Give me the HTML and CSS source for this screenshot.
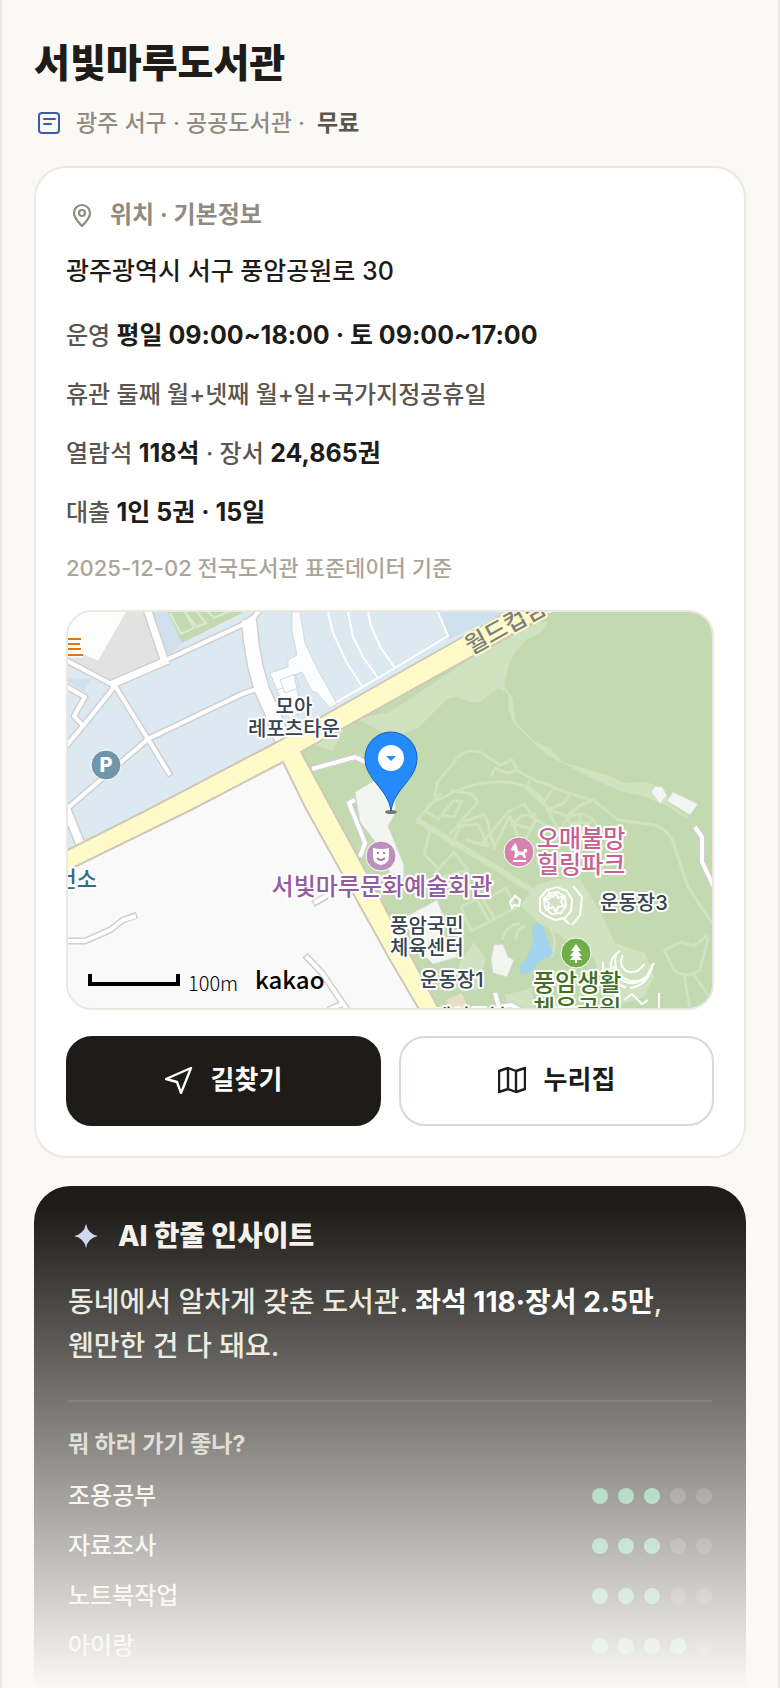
FILE: index.html
```html
<!DOCTYPE html>
<html lang="ko">
<head>
    <meta charset="utf-8">
    <meta name="viewport" content="width=device-width, initial-scale=1">
    <title>서빛마루도서관</title>
    <link rel="stylesheet" href="styles.css">
</head>
<body>
<main class="page">
    <h1>서빛마루도서관</h1>
    <p class="meta">
        <svg class="icon" viewBox="0 0 26 26" fill="none" stroke="currentColor" stroke-width="2" stroke-linecap="round">
            <rect x="3" y="3" width="20" height="20" rx="3"/>
            <path d="M8 9h11M8 14h7"/>
        </svg>
        <span>광주 서구 · 공공도서관 ·</span>
        <b>무료</b>
    </p>

    <section class="card">
        <h2 class="card_title">
            <svg class="icon" viewBox="0 0 26 26" fill="none" stroke="currentColor" stroke-width="2.2" stroke-linejoin="round">
                <path d="M13 24c-3-3-8-7.500-8-13a8 8 0 0 1 16 0c0 5.500-5 10-8 13z"/>
                <circle cx="13" cy="11" r="3"/>
            </svg>
            위치 · 기본정보
        </h2>
        <p class="address">광주광역시 서구 풍암공원로 30</p>
        <ul class="info">
            <li>운영 <b>평일 09:00~18:00 · 토 09:00~17:00</b></li>
            <li>휴관 둘째 월+넷째 월+일+국가지정공휴일</li>
            <li>열람석 <b>118석</b> · 장서 <b>24,865권</b></li>
            <li>대출 <b>1인 5권 · 15일</b></li>
        </ul>
        <p class="source">2025-12-02 전국도서관 표준데이터 기준</p>

        <div class="map">
            <svg viewBox="68 612 644 396" preserveAspectRatio="xMidYMid slice">
                <rect x="68" y="612" width="644" height="396" fill="#dce9f0"/>
                <!-- 블록 -->
                <path fill="#fcfcfc" d="M68 612h59l-29 49-30-12z"/>
                <path fill="#e2e2e2" d="M126 612h18l20 48-49 22-47-22v-6l13-1 17 8z"/>
                <path fill="#cfe1ee" d="M152 612h17l14 31-15 13zM68 678l23 1-7 12-16-9zM438 612h68l-58 28z"/>
                <path fill="#c3dab0" d="M168 612h76l-62 31z"/>
                <path fill="none" stroke="#dbe9cf" stroke-width="2" d="M170 613l11 21 13-6-9-16M185 612l12 15 9-4-9-11M208 612l6 6 14-6"/>
                <path fill="#f9f9f9" d="M68 868h7l208-106 135 246H68z"/>
                <path fill="#c3dab0" d="M301 752l89-50 162-90h160v396H439z"/>
                <path fill="#d0e2c0" d="M390 712l83-55 67-35h8l-7 11-14 6-12 13-6 13-5 21 8 11 4 25 19 20 15 6 12 14 45 13 18 8 22-1 16 8 12 20-10-5-22-9-23-5-33-15-40-21-20-19-14-13-4-12-1-17-8-5-5 1-15 12h-8l-17-5-8 2-29 29-26 10-40-22-20 35-25-9 12-15z"/>
                <path fill="#d0e2c0" d="M537 885l18-6h25l22 36 13 28 30 10 9 24-10 20-34 11-16-50-24-16-31-19-19-18zM460 962l14-20 12 17-10 32-21-7zM505 995l26-7 4 20h-26z"/>
                <!-- 산책로 -->
                <g fill="none" stroke="#d0e2c0" stroke-width="3" stroke-linejoin="round">
                    <path d="M435 797l2-14 23-28q10-6 20-3l20 13 12-5 6 11 20 11q10 1 16 6l40 13 24 19 36 5q16 5 20 20l14 42 28 42 10 4M664 802l24 16"/>
                    <path d="M428 805l26-13q30-14 60-9 18 3 29 17l12 24 22 26M417 820l24-27M424 810l14 9 15-18h9l-8 16-14-2M450 790l22 4 6 8-28 32M452 846l8-20 18-2 10 22-22-6"/>
                    <path stroke-width="6" d="M417 820l86 52 34 22"/>
                    <path d="M491 776l4-8 12 5 10-3M530 780l-4 8 24 22 17 6 12-10 14-6 18 14M552 790l-9 14M570 793l-6 10-14 6M480 846l28-34 16-8 12 16-14 26-12 6M536 814l-14 2-10 8 18 4M463 822l22-8 10 36M495 846l15-30 8 20M530 816l34 20"/>
                    <path d="M434 874l20-22 14 18-28 8zM430 830l-6 24 14 14M461 907l20-10 14 22-24 12-10-24M478 901l12 22M484 900l22-12 10 20-24 12M502 940q4-16 18-16M516 940q0-12 10-14M544 923q16 10 8 34M664 950l18-8 12 4 14-11M664 950l10 20q12 10 26 0l8-32M684 975l6 33M692 972l20 28"/>
                    <circle cx="580" cy="832" r="18"/>
                    <circle cx="580" cy="832" r="10"/>
                    <path d="M562 832h36M580 814v36M567 819l26 26M593 819l-26 26"/>
                </g>
                <!-- 이면도로 -->
                <g fill="none" stroke="#d0d0d0" stroke-linejoin="round">
                    <path stroke-width="10" d="M146 606l19 56M110 685l58-25"/>
                    <path stroke-width="7" d="M166 660l76-35 12-8 8-10M62 658l53 28 33 53 23 37M148 739l94-45 17-6M148 739l-86 74M115 686l-32 40-21 25M62 684l23 13-11 19 9 10"/>
                    <path stroke-width="17" d="M249 620l2 20 4 25 7 25 10 22 13 36"/>
                    <path stroke-width="11" d="M64 804l16 39"/>
                    <path stroke-width="7" d="M62 941h23l25-11 13-10 14-5M312 769l43-12 10 5M355 800l-6 3 16 40-5 14M305 955l17 18 26 38M313 904l14-8M695 827l7 10v25l13 27"/>
                    <path stroke-width="7" d="M495 993l4 14 12-2 15 8M328 1010l14-6"/>
                </g>
                <g fill="none" stroke="#fff" stroke-linejoin="round">
                    <path stroke-width="7" d="M146 606l19 56M110 685l58-25"/>
                    <path stroke-width="4" d="M166 660l76-35 12-8 8-10M62 658l53 28 33 53 22 36M148 739l94-45 17-6M148 739l-86 74M115 686l-32 40-21 25M62 684l23 13-11 19 9 10"/>
                    <path stroke-width="14" d="M249 620l2 20 4 25 7 25 10 22 13 36"/>
                    <path stroke-width="8" d="M64 804l16 39"/>
                    <path stroke-width="4" d="M62 941h23l25-11 13-10 13-4M312 769l43-12 10 5M355 800l-6 3 16 40-5 14M306 956l16 17 26 38M314 903l14-8M695 827l7 10v25l13 27"/>
                    <path stroke-width="4" d="M495 993l4 14 12-2 15 8M328 1010l14-6"/>
                    <path stroke-width="2" d="M328 612l5 21 14 30 16 25M348 612l5 25 10 20 15 21M368 612l3 14 10 22 14 20M335 703l60-35 53-32-10-24"/>
                </g>
                <!-- 건물 -->
                <g stroke="#d5d9da" stroke-width="1">
                    <path fill="#fafcfd" d="M292 612h8l5 31 12 25 20 36-7 4-13-15-5-2-10-19-8 3 3 15 5 20-12 10-13-30-7-17 18-6v-7l9-5-5-23z"/>
                    <path fill="none" d="M280 680l15-6 5 13-15 6zM277 690l6-2"/>
                    <path fill="#f3f6f0" d="M355 792l25-15 12 10 3 13 1 12-8 14 16 39v14l-14-6-10-25-20-26zM405 917l32-17 8 20-4 14 17 23-25 7-20-20z"/>
                    <path fill="#f3f6f0" d="M494 945l9-1 5 13 6 3-7 17-14-4-2-14zM655 786l7 1 5 8-7 9-9-12zM673 792l25 12-8 11-23-14z"/>
                    <path fill="#e9dcc0" stroke="none" d="M446 1000l16-7 6 15h-18z"/>
                </g>
                <!-- 광장, 야외무대 -->
                <g fill="none" stroke="#fff" stroke-width="2">
                    <path d="M540 911v-13l7-8 10-3 10 4 5 9-1 11-6 7-10 2-9-4z"/>
                    <path d="M545 908l-1-9 6-6 8-1 7 5 1 9-5 7-9 1zM549 893l4 4 3-4 2 5 6-2-3 6 3 4-6 1-2 5-3-5-6 2 2-5-3-4 4-2zM573 886l9 11-2 18-8 10M563 918l6 6M510 902l5-6 5 4-1 6-5-1-2 3z"/>
                    <path d="M620 951q-11 7-9 18 2 14 15 19M616 954q-3 16 6 23 14 9 25-1l7-13M613 966q6 18 20 17 16-2 19-18M623 955q-5 10 3 16 12 4 18-7M603 962v12M630 988q18-2 23-24M659 993v15M624 1000l8-6 10 10 6-4"/>
                </g>
                <path fill="#a3d4ee" d="M532 928q4-7 10-3l5 12 6 17-7 4q-8 3-14 13-7 5-11 1-4-4 1-9 6-4 11-20z"/>
                <!-- 간선도로 -->
                <path fill="#fffbc9" stroke="#cfc8b8" stroke-width="2" d="M60 854l87-44 130-68 113-64 115-65 24-14h40l-17 13-162 90-89 50 57 105 82 154h-20l-30-51-85-153-22-45-92 48-131 64z"/>

                <g class="labels">
                    <text x="294" y="714" text-anchor="middle">모아</text>
                    <text x="294" y="736" text-anchor="middle">레포츠타운</text>
                    <text x="600" y="910">운동장3</text>
                    <text x="390" y="933">풍암국민</text>
                    <text x="390" y="955">체육센터</text>
                    <text x="420" y="987">운동장1</text>
                    <text x="433" y="1024">게이트볼</text>
                    <text class="health" x="97" y="887" text-anchor="end">보건소</text>
                    <text class="big road" transform="translate(471 655) rotate(-29)">월드컵남로</text>
                    <text class="big hall" x="382" y="895" text-anchor="middle">서빛마루문화예술회관</text>
                    <text class="big heal" x="537" y="847">오매불망</text>
                    <text class="big heal" x="537" y="873">힐링파크</text>
                    <text class="big park" x="533" y="991">풍암생활</text>
                    <text class="big park" x="533" y="1017">체육공원</text>
                </g>
                <path stroke="#fff" stroke-width="5" d="M68 639h13M68 644h13M68 649h13M68 655h15"/>
                <path stroke="#e2750f" stroke-width="2" d="M68 639h13M68 644h12M68 649h13M68 655h15"/>

                <!-- 장소 아이콘 -->
                <g stroke="#fff" stroke-width="1">
                    <circle cx="106" cy="765" r="15" fill="#7096aa"/>
                    <circle cx="381" cy="856" r="15" fill="#bc8fbd"/>
                    <circle cx="519" cy="852" r="15" fill="#d583ae"/>
                    <circle cx="576" cy="953" r="15" fill="#6fae4a"/>
                </g>
                <text class="parking" x="106" y="772" text-anchor="middle">P</text>
                <path fill="#fff" d="M373 848q8 2 16 0v8q0 8-8 9-8-1-8-9z"/>
                <path fill="none" stroke="#a974aa" stroke-width="2" d="M377 853h2M383 853h2M377 858q4 4 8 0"/>
                <path fill="#fff" d="M515 843l2 3 1 5 5 1 1-3 3 0 0 3-2 1 1 5h-2l-2-3-3 0-3 3h-2l1-5-1-3-2 1-1-2 2-3zM513 860h13v2h-13z"/>
                <path fill="#fff" d="M576 944l5 7h-3l4 5h-3l3 4h-5v3h-2v-3h-5l3-4h-3l4-5h-3z"/>

                <!-- 도서관 핀 -->
                <ellipse cx="391" cy="812" rx="6" ry="2" fill="#6f7a6c"/>
                <path fill="#258bfc" stroke="#1460bd" stroke-width="1" d="M391 811c-3-23-26-31-26-53a26 26 0 0 1 52 0c0 22-23 30-26 53z"/>
                <circle cx="391" cy="758" r="13" fill="#fff"/>
                <path fill="#258bfc" d="M386 756h10l-5 5z"/>

                <!-- 축척 -->
                <path fill="none" stroke="#000" stroke-width="4" d="M90 974v10h88v-10"/>
                <text class="scale" x="188" y="991">100m</text>
                <text class="kakao" x="255" y="989">kakao</text>
            </svg>
        </div>

        <div class="actions">
            <button type="button" class="btn dark">
                <svg viewBox="0 0 28 28" fill="none" stroke="currentColor" stroke-width="2.4" stroke-linejoin="round">
                    <path d="M26 2L1 13l11 3 4 11z"/>
                </svg>
                길찾기
            </button>
            <button type="button" class="btn">
                <svg viewBox="0 0 28 28" fill="none" stroke="currentColor" stroke-width="2.4" stroke-linejoin="round">
                    <path d="M1 5l9-3 8 3 9-3v21l-9 3-8-3-9 3zM10 2v21M18 5v21"/>
                </svg>
                누리집
            </button>
        </div>
    </section>

    <section class="insight">
        <h2>
            <svg class="icon" viewBox="0 0 26 26" fill="#cdd6f0">
                <path d="M13 1q2 10 12 12-10 2-12 12-2-10-12-12 10-2 12-12z"/>
            </svg>
            AI 한줄 인사이트
        </h2>
        <p class="comment">동네에서 알차게 갖춘 도서관. <b>좌석 118·장서 2.5만</b>, 웬만한 건 다 돼요.</p>
        <h3>뭐 하러 가기 좋나?</h3>
        <ul class="scores">
            <li>조용공부 <span class="dots"><i class="on"></i><i class="on"></i><i class="on"></i><i></i><i></i></span></li>
            <li>자료조사 <span class="dots"><i class="on"></i><i class="on"></i><i class="on"></i><i></i><i></i></span></li>
            <li>노트북작업 <span class="dots"><i class="on"></i><i class="on"></i><i class="on"></i><i></i><i></i></span></li>
            <li>아이랑 <span class="dots"><i class="on"></i><i class="on"></i><i class="on"></i><i class="on"></i><i></i></span></li>
        </ul>
    </section>
    <div class="fade"></div>
</main>
</body>
</html>
```
FILE: styles.css
```css
*{ padding:0; margin:0; box-sizing:border-box; }
body{ background:#faf9f6; color:#1d1c18; font-family:Inter, "Noto Sans CJK KR", sans-serif; font-size:24px; word-break:keep-all; }
ul{ list-style:none; }
b{ font-weight:700; }
.page{ position:relative; min-height:100vh; padding:39px 32px 0; border-left:2px solid #ebe9e3; border-right:2px solid #ebe9e3; overflow:hidden; }

h1{ font-size:39px; line-height:48px; font-weight:900; }
.meta{ display:flex; align-items:center; gap:12px; margin-top:20px; font-size:23px; line-height:32px; font-weight:500; color:#908b80; }
.meta b{ color:#5a564e; }
.meta .icon{ color:#3d5bab; margin:0 2px; }
.icon{ width:26px; height:26px; flex:none; }

.card{ margin-top:27px; padding:31px 30px 30px; background:#fff; border:2px solid #ebe9e3; border-radius:32px; }
.card_title{ display:flex; align-items:center; gap:15px; padding-left:3px; font-size:24px; line-height:32px; font-weight:700; color:#908b80; }
.address{ margin-top:22px; font-size:25px; line-height:36px; font-weight:500; }
.info{ display:grid; gap:19px; margin-top:27px; line-height:40px; font-weight:500; color:#5a564e; }
.info b{ font-size:25px; line-height:24px; color:#1d1c18; }
.source{ margin-top:20px; font-size:22px; line-height:30px; font-weight:500; color:#aaa599; }

.map{ height:400px; margin-top:27px; border:2px solid #ebe7e1; border-radius:26px; overflow:hidden; }
.map svg{ display:block; width:100%; height:100%; }
.labels text{ font-size:20px; font-weight:500; fill:#37434e; stroke:#fff; stroke-width:4px; stroke-linejoin:round; paint-order:stroke; }
.labels .big{ font-size:24px; }
.labels .road{ fill:#7f7f7f; stroke:#fffbc9; }
.labels .hall{ fill:#955ba0; }
.labels .heal{ fill:#c95f93; }
.labels .park{ fill:#3f6f25; }
.labels .health{ font-size:22px; fill:#336b82; }
.parking{ font-size:20px; font-weight:800; fill:#fff; }
.scale{ font-family:"Noto Sans CJK KR", sans-serif; font-size:20px; font-weight:300; }
.kakao{ font-family:"Noto Sans CJK KR", sans-serif; font-size:24px; font-weight:500; }

.actions{ display:grid; grid-template-columns:1fr 1fr; gap:18px; margin-top:26px; }
.btn{ display:flex; align-items:center; justify-content:center; gap:18px; height:90px; padding-bottom:2px; background:#fff; border:2px solid #dcd9d1; border-radius:26px; color:#1d1c18; font-family:inherit; font-size:26px; line-height:32px; font-weight:700; }
.btn svg{ width:28px; height:28px; }
.btn.dark{ background:#1d1c18; border-color:#1d1c18; color:#fff; }

.insight{ margin-top:28px; padding:30px 34px 17px; background:#1d1c18; border-radius:36px 36px 0 0; color:#f3f1ea; }
.insight h2{ display:flex; align-items:center; gap:19px; padding-left:5px; font-size:28px; line-height:40px; font-weight:800; }
.comment{ margin-top:24px; padding-bottom:32px; font-size:28px; line-height:44px; font-weight:500; color:#e9e6dc; border-bottom:2px solid #34332f; }
.comment b{ color:#fff; }
.insight h3{ margin-top:26px; font-size:23px; line-height:32px; font-weight:700; color:#c9c5ba; }
.scores{ margin-top:11px; line-height:32px; font-weight:500; color:#f3f1ea; }
.scores li{ display:flex; align-items:center; justify-content:space-between; height:50px; }
.dots{ display:flex; gap:10px; }
.dots i{ width:16px; height:16px; border-radius:50%; background:#42413d; }
.dots .on{ background:#57b38a; }

/* 하단으로 갈수록 배경색으로 사라짐 */
.fade{ position:absolute; left:-2px; right:-2px; bottom:0; height:480px; background:linear-gradient(rgba(250,249,246,0), #faf9f6); pointer-events:none; }
```
